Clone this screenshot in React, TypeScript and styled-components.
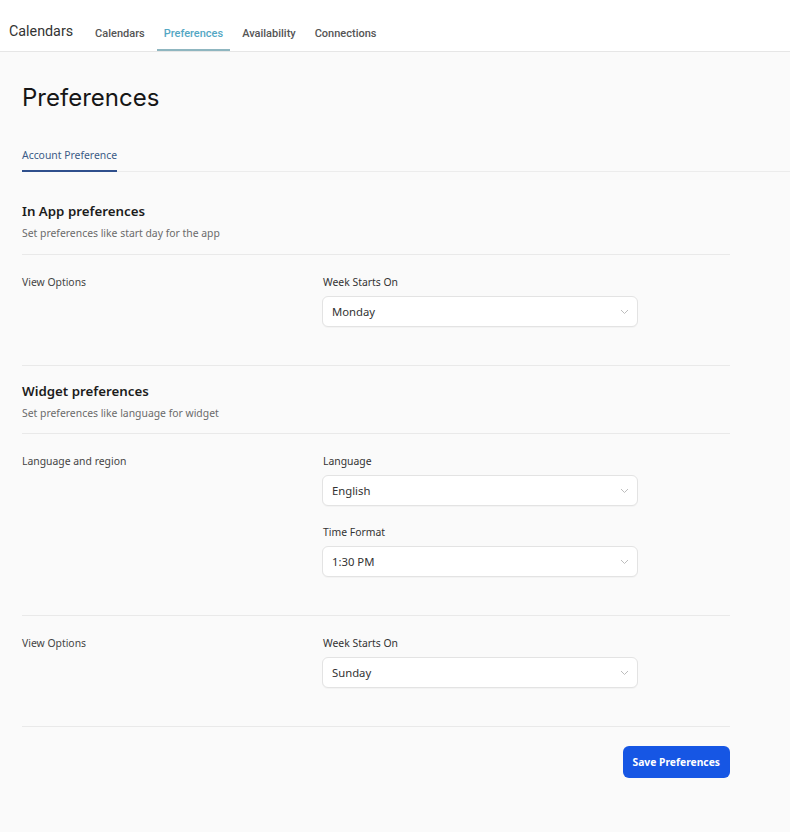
import React from "react";
import styled, { createGlobalStyle } from "styled-components";

const GlobalStyle = createGlobalStyle`
  body {
    margin: 0;
    background: #fafafa;
    font-family: "Noto Sans", "Open Sans", sans-serif;
    color: #222;
  }
`;

const TopBar = styled.header`
  height: 52px;
  box-sizing: border-box;
  background: #fff;
  border-bottom: 1px solid #e6e6e6;
  display: flex;
  align-items: stretch;
  padding: 18px 0 0 9px;
  font-family: Roboto, sans-serif;
`;

const Brand = styled.div`
  display: flex;
  align-items: center;
  font-size: 14.3px;
  color: #333;
  margin-right: 15px;
  padding-bottom: 7px;
`;

const NavList = styled.nav`
  display: flex;
  gap: 5px;
`;

const NavItem = styled.a<{ $active?: boolean }>`
  display: flex;
  align-items: center;
  padding: 0 7px;
  font-size: 11px;
  font-weight: 500;
  color: ${(p) => (p.$active ? "#54a7c4" : "#555")};
  border-bottom: 2px solid ${(p) => (p.$active ? "#8fb6c0" : "transparent")};
  text-decoration: none;
  cursor: pointer;
`;

const Main = styled.main`
  padding: 0 0 40px 22px;
`;

const PageTitle = styled.h1`
  margin: 0;
  padding-top: 28px;
  font-family: Inter, Roboto, sans-serif;
  font-size: 24px;
  font-weight: 400;
  color: #161616;
  line-height: 36px;
`;

const Tabs = styled.div`
  margin-top: 32px;
  border-bottom: 1px solid #ececec;
  display: flex;
`;

const Tab = styled.div<{ $active?: boolean }>`
  font-size: 10.4px;
  color: #3b5a86;
  padding-bottom: 8px;
  border-bottom: 2px solid ${(p) => (p.$active ? "#2f4f8c" : "transparent")};
  margin-bottom: -1px;
`;

const Content = styled.div`
  width: 708px;
`;

const SectionHead = styled.div<{ $first?: boolean }>`
  padding: ${(p) => (p.$first ? "29px 0 13px" : "15px 0 12px")};
  border-bottom: 1px solid #e9e9e9;
`;

const SectionTitle = styled.h2`
  margin: 0;
  font-size: 13.3px;
  font-weight: 600;
  color: #1c1c1c;
  line-height: 20px;
`;

const SectionNote = styled.p`
  margin: 4px 0 0;
  font-size: 10.4px;
  color: #6a6a6a;
  line-height: 16px;
`;

const Row = styled.div`
  display: grid;
  grid-template-columns: 300px 316px;
  padding: 19px 0 38px;
  border-bottom: 1px solid #e9e9e9;
`;

const RowLabel = styled.div`
  font-size: 10.4px;
  color: #444;
  line-height: 16px;
`;

const Fields = styled.div`
  display: flex;
  flex-direction: column;
  gap: 18px;
`;

const Field = styled.div`
  display: flex;
  flex-direction: column;
  gap: 6px;
`;

const FieldLabel = styled.label`
  font-size: 10.4px;
  color: #333;
  line-height: 16px;
  padding-left: 1px;
`;

const Select = styled.div`
  height: 31px;
  box-sizing: border-box;
  background: #fff;
  border: 1px solid #e3e3e3;
  border-radius: 6px;
  box-shadow: 0 1px 1px rgba(0, 0, 0, 0.03);
  display: flex;
  align-items: center;
  justify-content: space-between;
  padding: 0 8px 0 9px;
  font-size: 11.3px;
  color: #333;
`;

const Footer = styled.div`
  display: flex;
  justify-content: flex-end;
  padding-top: 19px;
`;

const SaveButton = styled.button`
  height: 32px;
  padding: 0 10px;
  border: none;
  border-radius: 6px;
  background: #1656e4;
  color: #fff;
  font-family: "Noto Sans", sans-serif;
  font-size: 10.3px;
  font-weight: 700;
  cursor: pointer;
`;

const Chevron = () => (
  <svg width="9" height="6" viewBox="0 0 9 6" fill="none">
    <path d="M1 1l3.5 3.5L8 1" stroke="#bdbdbd" strokeWidth="1" />
  </svg>
);

type SelectFieldProps = { label: string; value: string };

const SelectField = ({ label, value }: SelectFieldProps) => (
  <Field>
    <FieldLabel>{label}</FieldLabel>
    <Select>
      <span>{value}</span>
      <Chevron />
    </Select>
  </Field>
);

const App = () => {
  return (
    <>
      <GlobalStyle />
      <TopBar>
        <Brand>Calendars</Brand>
        <NavList>
          <NavItem>Calendars</NavItem>
          <NavItem $active>Preferences</NavItem>
          <NavItem>Availability</NavItem>
          <NavItem>Connections</NavItem>
        </NavList>
      </TopBar>
      <Main>
        <PageTitle>Preferences</PageTitle>
        <Tabs>
          <Tab $active>Account Preference</Tab>
        </Tabs>
        <Content>
          <SectionHead $first>
            <SectionTitle>In App preferences</SectionTitle>
            <SectionNote>Set preferences like start day for the app</SectionNote>
          </SectionHead>
          <Row>
            <RowLabel>View Options</RowLabel>
            <Fields>
              <SelectField label="Week Starts On" value="Monday" />
            </Fields>
          </Row>

          <SectionHead>
            <SectionTitle>Widget preferences</SectionTitle>
            <SectionNote>Set preferences like language for widget</SectionNote>
          </SectionHead>
          <Row>
            <RowLabel>Language and region</RowLabel>
            <Fields>
              <SelectField label="Language" value="English" />
              <SelectField label="Time Format" value="1:30 PM" />
            </Fields>
          </Row>
          <Row>
            <RowLabel>View Options</RowLabel>
            <Fields>
              <SelectField label="Week Starts On" value="Sunday" />
            </Fields>
          </Row>

          <Footer>
            <SaveButton>Save Preferences</SaveButton>
          </Footer>
        </Content>
      </Main>
    </>
  );
};

export default App;
